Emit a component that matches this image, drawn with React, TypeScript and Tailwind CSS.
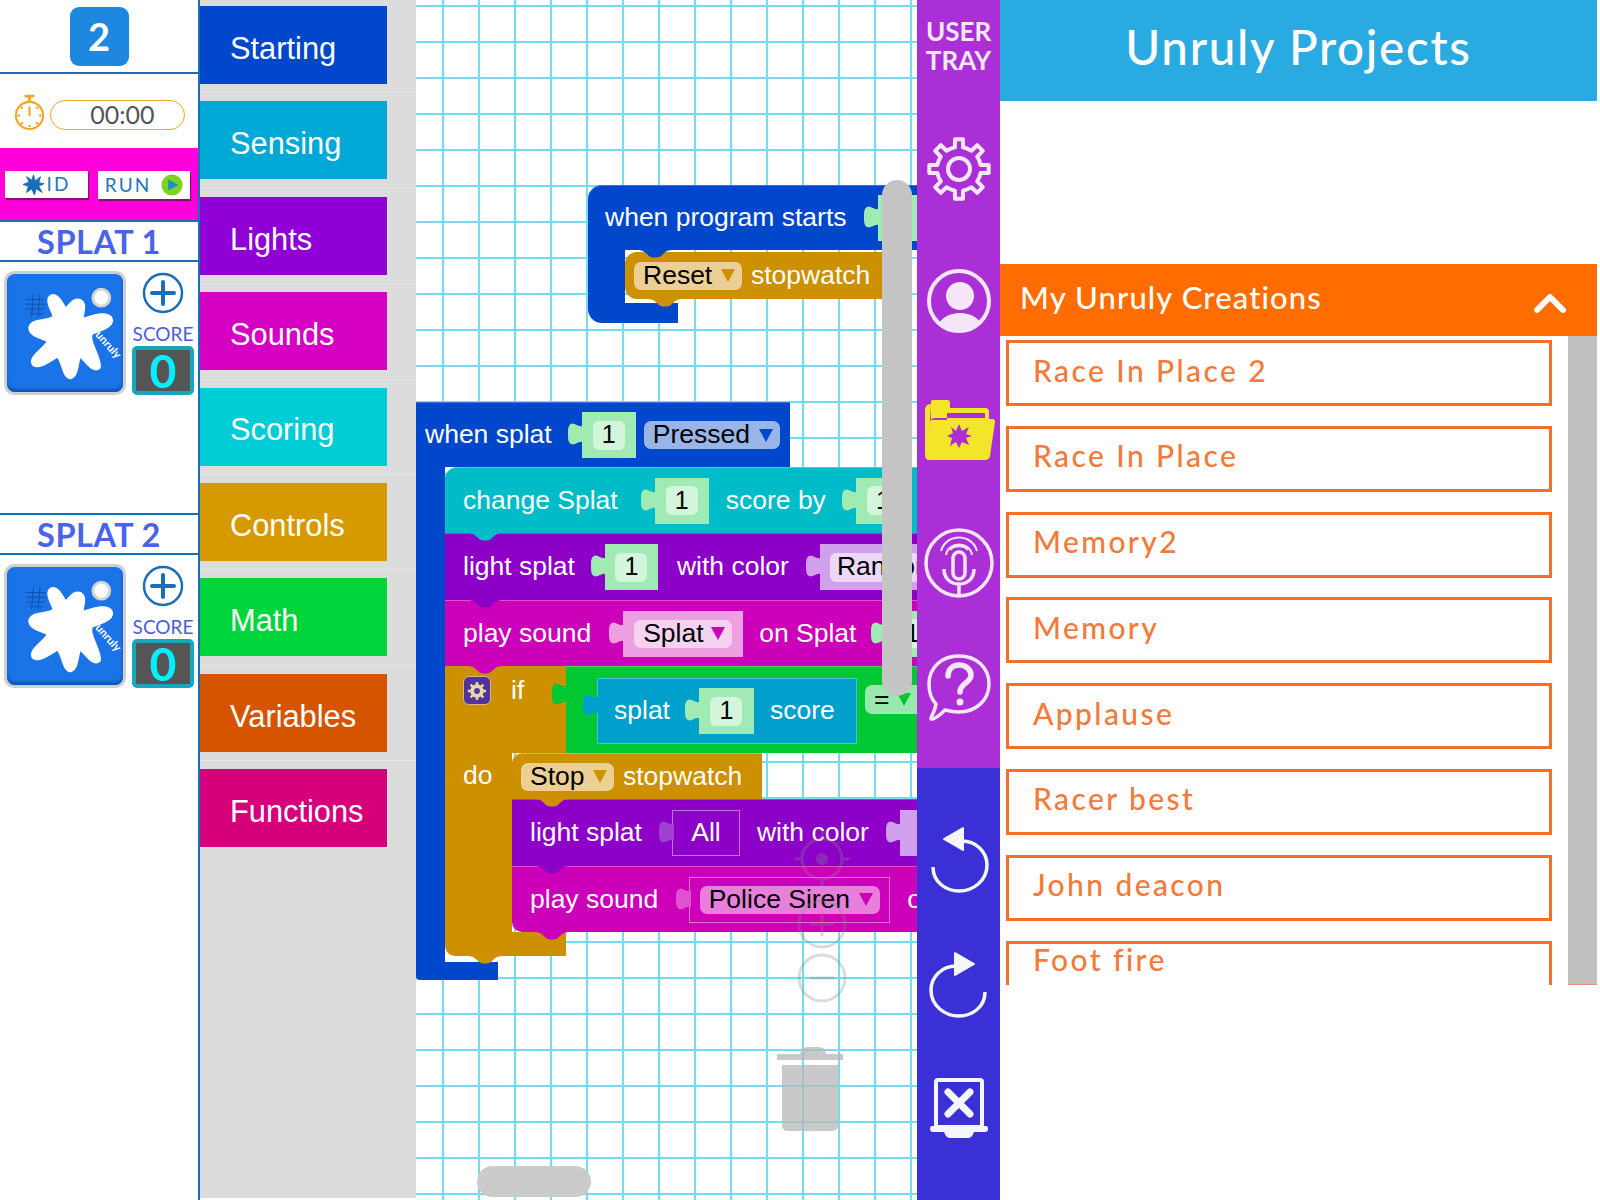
import React from 'react';

const blockFont = "font-['Liberation_Sans',Arial,sans-serif]";

const tools = [
  { name: 'Starting', bg: 'bg-[#0047cc]' },
  { name: 'Sensing', bg: 'bg-[#00a8d6]' },
  { name: 'Lights', bg: 'bg-[#9000d6]' },
  { name: 'Sounds', bg: 'bg-[#d600c2]' },
  { name: 'Scoring', bg: 'bg-[#00ccd6]' },
  { name: 'Controls', bg: 'bg-[#d69a00]' },
  { name: 'Math', bg: 'bg-[#00d63c]' },
  { name: 'Variables', bg: 'bg-[#d65400]' },
  { name: 'Functions', bg: 'bg-[#d6007a]' },
];

const projects = ['Race In Place 2', 'Race In Place', 'Memory2', 'Memory', 'Applause', 'Racer best', 'John deacon'];

const SPLAT_PATH =
  'M47 22 C54 20 58 30 62 36 C66 34 70 24 78 27 C85 31 79 42 80 47 C88 45 104 38 110 45 C115 54 100 58 90 62 C84 68 100 88 98 98 C92 104 84 92 78 86 C74 88 76 106 68 109 C60 110 60 94 54 86 C46 90 34 100 28 95 C22 88 40 78 44 70 C36 66 24 64 24 56 C26 46 44 50 50 44 C48 38 40 26 47 22 Z';

function gearPath(cx: number, cy: number, outer: number, inner: number, teeth: number) {
  const pts: string[] = [];
  const step = (Math.PI * 2) / teeth;
  for (let i = 0; i < teeth; i++) {
    const a = i * step - Math.PI / 2;
    const offs: [number, number][] = [
      [-0.5, inner],
      [-0.24, inner],
      [-0.17, outer],
      [0.17, outer],
      [0.24, inner],
    ];
    offs.forEach(([o, r]) => {
      const t = a + o * step;
      pts.push(`${(cx + Math.cos(t) * r).toFixed(1)} ${(cy + Math.sin(t) * r).toFixed(1)}`);
    });
  }
  return `M${pts.join(' L')} Z`;
}

const Tab = ({ fill }: { fill: string }) => (
  <svg viewBox="0 0 16 28" className={`absolute -left-[14px] top-1/2 -mt-[15px] w-[15px] h-[28px] ${fill}`}>
    <path d="M16 2 V5 C12 8 8 2 4 3 C0 4 0 9 0 14 C0 19 0 24 4 25 C8 26 12 20 16 23 V26 Z" />
  </svg>
);

const Slot = ({
  w,
  h = 'h-[46px]',
  className = 'bg-[#a0eab4]',
  tab = 'fill-[#a0eab4]',
  children,
}: {
  w: string;
  h?: string;
  className?: string;
  tab?: string;
  children?: React.ReactNode;
}) => (
  <div className={`relative shrink-0 ml-[14px] flex items-center justify-center ${w} ${h} ${className}`}>
    <Tab fill={tab} />
    {children}
  </div>
);

const NumField = ({ value = '1' }: { value?: string }) => (
  <div className="w-[32px] h-[29px] rounded-[6px] bg-[#d3f5dc] flex items-center justify-center text-black text-[25px]">{value}</div>
);

const Arrow = ({ fill }: { fill: string }) => (
  <svg viewBox="0 0 14 13" className={`w-[14px] h-[13px] shrink-0 ${fill}`}>
    <path d="M0 0 H14 L7 13 Z" />
  </svg>
);

const Dropdown = ({ label, bg, arrow, w }: { label: string; bg: string; arrow: string; w: string }) => (
  <div className={`shrink-0 h-[28px] rounded-[7px] flex items-center justify-between pl-[9px] pr-[7px] text-black text-[26.5px] ${bg} ${w}`}>
    <span>{label}</span>
    <Arrow fill={arrow} />
  </div>
);

const Notch = ({ fill, left = 'left-[22px]' }: { fill: string; left?: string }) => (
  <svg viewBox="0 0 36 8" className={`absolute -bottom-[8px] z-10 w-[36px] h-[8px] ${left} ${fill}`}>
    <path d="M0 0 C6 0 8 2 12 6 C15 8 21 8 24 6 C28 2 30 0 36 0 Z" />
  </svg>
);

const Splat = () => (
  <svg viewBox="0 0 123 123" className="w-full h-full">
    <path d={SPLAT_PATH} fill="#fff" stroke="#fff" strokeWidth="3" strokeLinejoin="round" />
    <circle cx="100" cy="24" r="9" fill="#fff" stroke="#d4d4d4" strokeWidth="3" />
    <g stroke="#1250a8" strokeWidth="1" fill="none">
      <path d="M20 26 H40 M20 31 H42 M20 36 H40 M24 41 H38 M28 20 L26 44 M35 20 L33 44" />
    </g>
    <text x="0" y="0" transform="translate(93 64) rotate(48)" fill="#fff" fontSize="12" fontWeight="700" fontFamily="Lato, sans-serif">
      unruly
    </text>
  </svg>
);

const PlayerCard = ({ n, divider }: { n: number; divider?: boolean }) => (
  <section className={divider ? 'h-[293px] shrink-0 border-b-2 border-[#1a6eb5]' : 'h-[293px] shrink-0'}>
    <div className="h-[40px] pt-[3px] border-b-2 border-[#1a6eb5] flex items-center justify-center text-[#4a63e8] text-[32.5px] font-bold font-['Lato',sans-serif] tracking-[0.5px]">
      SPLAT {n}
    </div>
    <div className="flex pl-[4px] pt-[9px]">
      <div className="w-[122px] h-[124px] rounded-[10px] bg-[#cfcfcf] p-[3px]">
        <div className="w-full h-full rounded-[8px] bg-[#1b73e8] shadow-[inset_0_-3px_3px_#0f55b5]">
          <Splat />
        </div>
      </div>
      <div className="w-[66px] ml-[4px] flex flex-col items-center">
        <svg viewBox="0 0 42 42" className="w-[42px] h-[42px] mt-[1px]">
          <circle cx="21" cy="21" r="19" fill="none" stroke="#1a6eb5" strokeWidth="2.5" />
          <path d="M21 10 V32 M10 21 H32" stroke="#1a6eb5" strokeWidth="4" strokeLinecap="round" />
        </svg>
        <div className="mt-[9px] text-[#4a5ee0] text-[19px] leading-[22px] font-['Lato',sans-serif]">SCORE</div>
        <div className="w-[62px] h-[49px] mt-[1px] rounded-[5px] border-[4px] border-[#16a8b8] bg-[#555] flex items-center justify-center text-[#00f0ff] text-[46px] font-bold font-['Lato',sans-serif]">
          0
        </div>
      </div>
    </div>
  </section>
);

const LeftColumn = () => (
  <aside className="w-[200px] shrink-0 h-full border-r-2 border-[#1a6eb5] bg-white flex flex-col">
    <div className="h-[74px] shrink-0 border-b-2 border-[#1a6eb5] flex items-start justify-center pt-[7px]">
      <div className="w-[59px] h-[59px] rounded-[9px] bg-[#1e88e0] text-white text-[38px] font-bold flex items-center justify-center font-['Lato',sans-serif]">
        2
      </div>
    </div>
    <div className="h-[74px] shrink-0 flex items-start pl-[14px] pt-[20px]">
      <svg viewBox="0 0 32 38" className="w-[31px] h-[37px]">
        <g fill="none" stroke="#f5a623" strokeWidth="2.2">
          <circle cx="16" cy="22" r="14" />
          <path d="M11 2 H21 M16 2 V8" strokeWidth="2.8" />
          <path d="M16 13 V23" strokeWidth="2.2" />
        </g>
        <g fill="#f5a623">
          <circle cx="16" cy="33" r="1.3" />
          <circle cx="27" cy="22" r="1.3" />
          <circle cx="5" cy="22" r="1.3" />
          <circle cx="8" cy="14" r="1.3" />
          <circle cx="24" cy="14" r="1.3" />
          <circle cx="8" cy="30" r="1.3" />
          <circle cx="24" cy="30" r="1.3" />
        </g>
      </svg>
      <div className="ml-[5px] mt-[6px] w-[135px] h-[30px] rounded-full border-[1.5px] border-[#f5a623] flex items-center justify-center pl-[10px] text-[#555] text-[25px] font-['Lato',sans-serif]">
        00:00
      </div>
    </div>
    <div className="h-[74px] shrink-0 bg-[#ff00dc] border-b-2 border-[#1a6eb5] flex items-start gap-[10px] pl-[5px] pt-[23px]">
      <div className="w-[83px] h-[27px] bg-white shadow-[1px_2px_1px_#8a1070] flex items-center justify-center gap-[3px] text-[#2277bb] text-[19px] tracking-[2px] font-['Lato',sans-serif]">
        <svg viewBox="0 0 24 24" className="w-[21px] h-[21px]">
          <path d="M12 1 L14 8 L20 3 L18 10 L24 11 L18 14 L22 21 L15 17 L13 24 L10 17 L4 21 L6 14 L0 12 L7 9 L4 3 L10 7 Z" fill="#1a6eb5" stroke="#1a6eb5" strokeLinejoin="round" />
        </svg>
        ID
      </div>
      <div className="w-[92px] h-[28px] bg-white shadow-[1px_2px_1px_#8a1070] flex items-center justify-center gap-[10px] text-[#2277bb] text-[19px] tracking-[2px] font-['Lato',sans-serif]">
        RUN
        <svg viewBox="0 0 24 24" className="w-[22px] h-[22px]">
          <circle cx="12" cy="12" r="10" fill="#7ed321" stroke="#7ed321" strokeWidth="3" />
          <path d="M8 6 L19 12 L8 18 Z" fill="#1a8ccf" />
        </svg>
      </div>
    </div>
    <PlayerCard n={1} divider />
    <PlayerCard n={2} />
  </aside>
);

const Toolbox = () => (
  <nav className="w-[216px] shrink-0 h-full bg-[#dcdcdc] -mt-[2px]">
    {tools.map((t) => (
      <div key={t.name} className="h-[95.4px] pt-[8px] border-b border-[#e5e5e5] last:border-b-0">
        <div className={`w-[187px] h-[78px] flex items-center pl-[30px] pt-[8px] text-white text-[30.8px] ${blockFont} ${t.bg}`}>{t.name}</div>
      </div>
    ))}
  </nav>
);

const rowBase = 'relative flex items-center whitespace-nowrap text-white text-[26.5px] shrink-0';

const ProgramStartBlock = () => (
  <div className="absolute left-[172px] top-[185px] w-[345px]">
    <div className={`${rowBase} h-[65px] rounded-tl-[14px] bg-[#0047cc] border-t border-[#3a70dd] pl-[17px]`}>
      when program starts
      <div className="ml-[17px]">
        <Slot w="w-[60px]" />
      </div>
      <Notch fill="fill-[#0047cc]" left="left-[49px]" />
    </div>
    <div className="flex">
      <div className="w-[37px] h-[53px] bg-[#0047cc] shrink-0" />
      <div className={`${rowBase} w-[280px] h-[47px] mt-[2px] rounded-l-[12px] bg-[#cc9000] pl-[9px]`}>
        <Dropdown label="Reset" bg="bg-[#eccf94]" arrow="fill-[#cc9000]" w="w-[108px]" />
        <span className="ml-[9px]">stopwatch</span>
        <Notch fill="fill-[#cc9000]" />
      </div>
    </div>
    <div className="w-[90px] h-[20px] bg-[#0047cc] rounded-bl-[14px]" />
  </div>
);

const SplatEventBlock = () => (
  <div className="absolute left-0 top-[402px] w-[520px]">
    <div className={`${rowBase} w-[374px] h-[65px] bg-[#0047cc] border-t border-[#3a70dd] pl-[9px]`}>
      when splat
      <div className="ml-[16px]">
        <Slot w="w-[54px]" className="bg-[#a0eab4] ml-[14px]">
          <NumField />
        </Slot>
      </div>
      <div className="ml-[8px]">
        <Dropdown label="Pressed" bg="bg-[#99b5e8]" arrow="fill-[#0047cc]" w="w-[136px]" />
      </div>
    </div>
    <div className="flex">
      <div className="w-[29px] shrink-0 bg-[#0047cc]" />
      <div className="w-[491px] flex flex-col pb-[6px]">
        <div className={`${rowBase} h-[66px] rounded-tl-[12px] bg-[#00bcc8] border-t border-[#40d0d8] pl-[18px]`}>
          <Notch fill="fill-[#00bcc8]" />
          change Splat
          <div className="ml-[23px]">
            <Slot w="w-[54px]"><NumField /></Slot>
          </div>
          <span className="ml-[17px]">score by</span>
          <div className="ml-[16px]">
            <Slot w="w-[54px]"><NumField /></Slot>
          </div>
        </div>
        <div className={`${rowBase} h-[67px] bg-[#8c00c8] border-t border-[#a83ad8] pl-[18px]`}>
          <Notch fill="fill-[#8c00c8]" />
          light splat
          <div className="ml-[16px]">
            <Slot w="w-[53px]"><NumField /></Slot>
          </div>
          <span className="ml-[19px]">with color</span>
          <div className="ml-[17px]">
            <Slot w="w-[110px]" className="bg-[#d0a0ec]" tab="fill-[#d0a0ec]">
              <div className="w-[90px] h-[29px] rounded-[6px] bg-[#ecd8f8] pl-[7px] flex items-center text-black">Random</div>
            </Slot>
          </div>
        </div>
        <div className={`${rowBase} h-[66px] bg-[#cc00b8] border-t border-[#de50cf] pl-[18px]`}>
          <Notch fill="fill-[#cc00b8]" />
          play sound
          <div className="ml-[18px]">
            <Slot w="w-[120px]" className="bg-[#ee9fe2]" tab="fill-[#ee9fe2]">
              <Dropdown label="Splat" bg="bg-[#f5d2f0]" arrow="fill-[#cc00b8]" w="w-[98px]" />
            </Slot>
          </div>
          <span className="ml-[16px]">on Splat</span>
          <div className="ml-[15px]">
            <Slot w="w-[54px]"><NumField /></Slot>
          </div>
        </div>
        <IfBlock />
      </div>
    </div>
    <div className="w-[82px] h-[18px] bg-[#0047cc] rounded-bl-[4px]" />
  </div>
);

const IfBlock = () => (
  <div className="relative flex flex-col shrink-0 text-white text-[26.5px] whitespace-nowrap">
    <div className="flex h-[87px]">
      <div className="relative w-[121px] shrink-0 bg-[#cc9000] flex items-start pl-[18px] pt-[10px] gap-[20px]">
        <div className="w-[28px] h-[29px] rounded-[6px] bg-[#50349c] border border-[#d8b880] flex items-center justify-center">
          <svg viewBox="0 0 24 24" className="w-[20px] h-[20px]">
            <path d={gearPath(12, 12, 11, 8, 8)} fill="#e8d8a8" />
            <circle cx="12" cy="12" r="3.5" fill="#50349c" />
          </svg>
        </div>
        <span className="leading-[28px]">if</span>
      </div>
      <div className="relative w-[370px] bg-[#00c832] border-t border-[#40d868] flex items-start pl-[31px] pt-[11px]">
        <svg viewBox="0 0 16 28" className="absolute left-[-14px] top-[13px] w-[15px] h-[28px] fill-[#00c832]">
          <path d="M16 2 V5 C12 8 8 2 4 3 C0 4 0 9 0 14 C0 19 0 24 4 25 C8 26 12 20 16 23 V26 Z" />
        </svg>
        <div className="relative w-[260px] h-[66px] bg-[#00a0cc] border border-[#50c0dc] flex items-center pl-[16px] shrink-0">
          <svg viewBox="0 0 16 28" className="absolute left-[-15px] top-[12px] w-[15px] h-[28px] fill-[#00a0cc]">
            <path d="M16 2 V5 C12 8 8 2 4 3 C0 4 0 9 0 14 C0 19 0 24 4 25 C8 26 12 20 16 23 V26 Z" />
          </svg>
          splat
          <div className="ml-[15px]">
            <Slot w="w-[55px]"><NumField /></Slot>
          </div>
          <span className="ml-[16px]">score</span>
        </div>
        <div className="ml-[8px] mt-[7px] w-[60px] h-[29px] rounded-[7px] bg-[#99e8ad] flex items-center pl-[9px] gap-[8px] text-black shrink-0">
          =
          <Arrow fill="fill-[#00c832]" />
        </div>
      </div>
    </div>
    <div className="flex">
      <div className="w-[67px] shrink-0 bg-[#cc9000] pl-[18px] pt-[3px]">do</div>
      <div className="flex flex-col w-[424px]">
        <div className="relative w-[250px] h-[46px] rounded-tl-[10px] bg-[#cc9000] border-t border-[#dcb050] flex items-center pl-[9px]">
          <Dropdown label="Stop" bg="bg-[#eccf94]" arrow="fill-[#cc9000]" w="w-[93px]" />
          <span className="ml-[9px]">stopwatch</span>
          <Notch fill="fill-[#cc9000]" />
        </div>
        <div className="relative h-[67px] bg-[#8c00c8] border-t border-[#a83ad8] flex items-center pl-[18px]">
          <Notch fill="fill-[#8c00c8]" />
          light splat
          <div className="ml-[16px]">
            <Slot w="w-[68px]" className="bg-[#8c00c8] border border-[#c070e0]" tab="fill-[#a040d0]">All</Slot>
          </div>
          <span className="ml-[17px]">with color</span>
          <div className="ml-[17px]">
            <Slot w="w-[60px]" className="bg-[#d0a0ec]" tab="fill-[#d0a0ec]" />
          </div>
        </div>
        <div className="relative h-[66px] rounded-bl-[10px] bg-[#cc00b8] border-t border-[#de50cf] flex items-center pl-[18px]">
          <Notch fill="fill-[#cc00b8]" />
          play sound
          <div className="ml-[17px]">
            <Slot w="w-[201px]" className="bg-[#cc00b8] border border-[#e070d8]" tab="fill-[#e050d0]">
              <Dropdown label="Police Siren" bg="bg-[#e87fdc]" arrow="fill-[#cc00b8]" w="w-[180px]" />
            </Slot>
          </div>
          <span className="ml-[17px]">on Splat</span>
        </div>
      </div>
    </div>
    <div className="relative w-[121px] h-[24px] bg-[#cc9000] rounded-bl-[10px]">
      <Notch fill="fill-[#cc9000]" />
    </div>
  </div>
);

const Workspace = () => (
  <main
    className={`relative w-[501px] shrink-0 h-full overflow-hidden bg-white bg-[linear-gradient(#72dcf0_2px,transparent_2px),linear-gradient(90deg,#72dcf0_2px,transparent_2px)] bg-size-[36px_36px] bg-position-[26px_5px] ${blockFont}`}
  >
    <ProgramStartBlock />
    <SplatEventBlock />
    {/* scrollbars sit over the blocks */}
    <div className="absolute left-[466px] top-[180px] w-[30px] h-[516px] rounded-full bg-[#c4c4c4]" />
    <div className="absolute left-[61px] top-[1166px] w-[114px] h-[31px] rounded-full bg-[#cbcbcb]" />
    <svg viewBox="0 0 60 170" className="absolute left-[376px] top-[829px] w-[60px] h-[176px] opacity-30">
      <g fill="none" stroke="#8c8c8c" strokeWidth="3">
        <circle cx="30" cy="27" r="20" />
        <path d="M2 27 H10 M50 27 H58 M30 0 V7 M30 47 V54" />
        <circle cx="30" cy="92" r="23" />
        <path d="M18 92 H42 M30 80 V104" />
        <circle cx="30" cy="146" r="23" />
        <path d="M18 146 H42" />
      </g>
      <circle cx="30" cy="27" r="6" fill="#8c8c8c" />
    </svg>
    <svg viewBox="0 0 66 84" className="absolute left-[361px] top-[1047px] w-[66px] h-[84px] opacity-75">
      <path d="M0 7 H23 Q24 0 31 0 H42 Q48 0 49 7 H66 V13 H0 Z M5 18 H61 V78 Q61 84 55 84 H11 Q5 84 5 78 Z" fill="#b8b8b8" />
    </svg>
  </main>
);

const RailButton = ({ children, h }: { children: React.ReactNode; h: string }) => (
  <div className={`flex items-center justify-center shrink-0 ${h}`}>{children}</div>
);

const UserTray = () => (
  <div className="w-[83px] shrink-0 h-full flex flex-col text-[#f5e6fa]">
    <div className="h-[768px] bg-[#ab2fd6] shrink-0 flex flex-col">
      <div className="h-[110px] pt-[17px] text-center text-[26px] leading-[29px] font-bold font-['Lato',sans-serif]">
        USER
        <br />
        TRAY
      </div>
      <RailButton h="h-[134px] -mt-[8px]">
        <svg viewBox="0 0 64 64" className="w-[64px] h-[64px]">
          <path d={gearPath(32, 32, 30, 22, 8)} fill="none" stroke="currentColor" strokeWidth="4" strokeLinejoin="round" />
          <circle cx="32" cy="32" r="11" fill="none" stroke="currentColor" strokeWidth="4" />
        </svg>
      </RailButton>
      <RailButton h="h-[130px]">
        <svg viewBox="0 0 64 64" className="w-[64px] h-[64px]">
          <defs>
            <clipPath id="profileClip">
              <circle cx="32" cy="32" r="30" />
            </clipPath>
          </defs>
          <circle cx="32" cy="32" r="30" fill="none" stroke="currentColor" strokeWidth="4" />
          <circle cx="33" cy="27" r="14" fill="currentColor" />
          <path d="M8 66 C10 48 24 44 33 44 C42 44 56 48 58 66 Z" fill="currentColor" clipPath="url(#profileClip)" />
        </svg>
      </RailButton>
      <RailButton h="h-[130px] -mt-[1px]">
        <svg viewBox="0 0 72 60" className="w-[72px] h-[60px]">
          <path d="M2 54 V10 Q2 4 8 4 V1 Q8 0 10 0 H24 Q27 0 27 3 V8 H62 Q66 8 66 12 V19 H70 Q72 19 72 22 L67 56 Q66 60 62 60 H6 Q2 60 2 54 Z" fill="#f2e52a" />
          <path d="M8 6 V20 L10 20 H24 V13 H62 V18 H12 Q8 18 7 22 L6 34 Z" fill="#ab2fd6" />
          <path d="M36 24 L39 31 L46 27 L43 34 L49 36 L43 38 L46 45 L39 42 L36 48 L33 42 L27 46 L29 38 L24 36 L30 33 L28 27 L33 31 Z" fill="#ab2fd6" />
        </svg>
      </RailButton>
      <RailButton h="h-[136px]">
        <svg viewBox="0 0 70 70" className="w-[70px] h-[70px]" fill="none" stroke="currentColor">
          <circle cx="35" cy="35" r="33" strokeWidth="3.5" />
          <rect x="29" y="24" width="12" height="27" rx="6" strokeWidth="3.5" />
          <path d="M20 41 C20 50 26 56 35 56 C44 56 50 50 50 41 M35 56 V68" strokeWidth="3.5" />
          <path d="M22 27 C24 13 46 13 48 27 M17 23 C22 5 48 5 53 23 M26 22 C30 17 40 17 44 22" strokeWidth="2" />
        </svg>
      </RailButton>
      <RailButton h="h-[108px] mt-[3px]">
        <svg viewBox="0 0 64 68" className="w-[64px] h-[68px]" fill="none" stroke="currentColor">
          <path d="M32 2 C50 2 62 14 62 30 C62 47 48 58 32 58 C27 58 22 57 18 56 C14 60 8 66 4 65 C3 64 8 58 9 50 C4 45 2 38 2 30 C2 14 14 2 32 2 Z" strokeWidth="3.5" strokeLinejoin="round" />
          <path d="M21 22 C21 14 27 11 32 11 C38 11 44 15 44 21 C44 29 33 29 33 38" strokeWidth="5.5" strokeLinecap="round" />
          <circle cx="33" cy="48" r="3.5" fill="currentColor" stroke="none" />
        </svg>
      </RailButton>
    </div>
    <div className="flex-1 bg-[#3a30d6] flex flex-col text-[#f5f5fc]">
      <RailButton h="h-[126px] mt-[29px]">
        <svg viewBox="0 0 60 70" className="w-[60px] h-[70px]" fill="none">
          <path d="M4 42 C4 58 18 66 30 66 C44 66 58 56 58 40 C58 26 46 16 33 16" stroke="currentColor" strokeWidth="3.5" />
          <path d="M15 14 L34 3 V25 Z" fill="currentColor" stroke="currentColor" strokeWidth="2" strokeLinejoin="round" />
        </svg>
      </RailButton>
      <RailButton h="h-[124px]">
        <svg viewBox="0 0 60 70" className="w-[60px] h-[70px]" fill="none">
          <path d="M56 42 C56 58 42 66 30 66 C16 66 2 56 2 40 C2 26 14 16 27 16" stroke="currentColor" strokeWidth="3.5" />
          <path d="M45 14 L26 3 V25 Z" fill="currentColor" stroke="currentColor" strokeWidth="2" strokeLinejoin="round" />
        </svg>
      </RailButton>
      <RailButton h="h-[122px]">
        <svg viewBox="0 0 58 60" className="w-[58px] h-[60px]" fill="none">
          <rect x="6" y="2" width="46" height="47" rx="2" stroke="currentColor" strokeWidth="4" />
          <path d="M18 14 L40 36 M40 14 L18 36" stroke="currentColor" strokeWidth="7" strokeLinecap="round" />
          <path d="M2 48 H56 Q58 48 58 51 Q58 54 55 54 H44 Q42 60 38 60 H20 Q16 60 14 54 H3 Q0 54 0 51 Q0 48 2 48 Z" fill="currentColor" />
        </svg>
      </RailButton>
    </div>
  </div>
);

const ProjectsPanel = () => (
  <div className="w-[597px] shrink-0 h-full bg-white font-['Lato',sans-serif]">
    <header className="h-[101px] pb-[8px] bg-[#29abe2] flex items-center justify-center text-white text-[47.5px] font-medium tracking-[1.7px]">
      Unruly Projects
    </header>
    <div className="h-[163px]" />
    <div className="h-[72px] pb-[6px] bg-[#ff6d00] flex items-center justify-between pl-[20px] pr-[30px] text-white text-[31px] font-medium tracking-[1.1px]">
      My Unruly Creations
      <svg viewBox="0 0 34 22" className="w-[34px] h-[22px] mt-[11px]">
        <path d="M4 18 L17 5 L30 18" fill="none" stroke="#fff" strokeWidth="6" strokeLinecap="round" strokeLinejoin="round" />
      </svg>
    </div>
    <div className="flex h-[649px] overflow-hidden">
      <div className="w-[568px] pl-[6px] pt-[4px] flex flex-col gap-[19.8px]">
        {projects.map((p) => (
          <div key={p} className="w-[546px] h-[66px] shrink-0 border-[3px] border-[#f47029] flex items-center pl-[24px] pb-[6px] text-[#f47a3a] text-[30px] font-medium tracking-[2.4px]">
            {p}
          </div>
        ))}
        <div className="w-[546px] h-[66px] shrink-0 border-[3px] border-[#f47029] flex items-start pl-[24px] text-[#f47a3a] text-[30px] leading-[30px] font-medium tracking-[2.4px]">
          Foot fire
        </div>
      </div>
      <div className="w-[29px] h-full bg-[#c0c0c0] border-b border-[#e89070]" />
    </div>
  </div>
);

const App = () => {
  return (
    <div className="w-[1600px] h-[1200px] flex overflow-hidden bg-white">
      <LeftColumn />
      <Toolbox />
      <Workspace />
      <UserTray />
      <ProjectsPanel />
    </div>
  );
};

export default App;
